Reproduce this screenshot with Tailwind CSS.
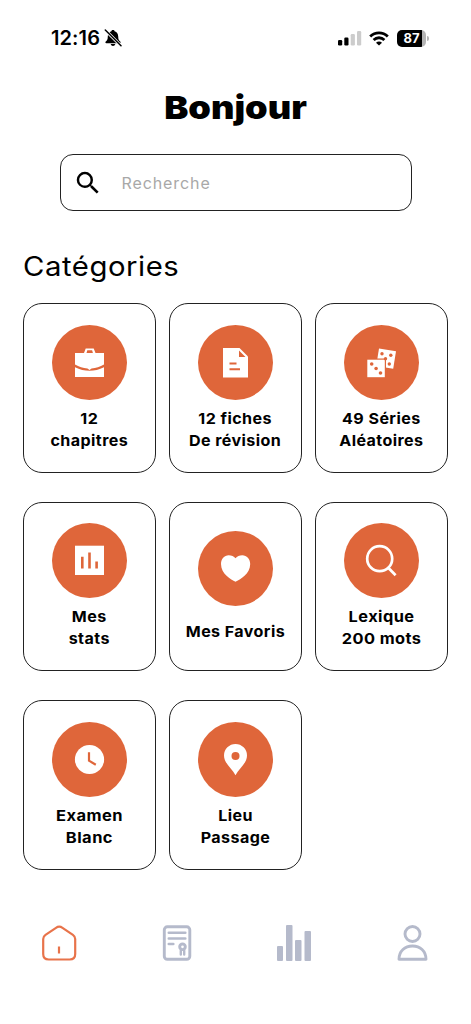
<!DOCTYPE html>
<html lang="fr">
<head>
<meta charset="utf-8">
<title>Bonjour</title>
<script src="https://cdn.jsdelivr.net/npm/@tailwindcss/browser@4"></script>
</head>
<body class="bg-white text-black font-['Inter',sans-serif]">
<main class="w-[471px] h-[1024px] overflow-hidden flex flex-col">
  <header class="h-[76px] shrink-0 flex items-center justify-between pl-[51px] pr-[42px]">
    <div class="flex items-center gap-[4px]">
      <span class="text-[20px] font-semibold tracking-[0.1px]">12:16</span>
      <svg class="w-[18px] h-[18px]" viewBox="0 0 18 18"><path d="M9 1c.9 0 1.500.5 1.600 1.300C13 3 14.200 5 14.200 7.500c0 3 .8 4 2 5.100.8.800.4 1.600-.5 1.600H2.300c-.9 0-1.300-.8-.5-1.600C3 11.500 3.800 10.500 3.800 7.500 3.800 5 5 3 7.400 2.300 7.500 1.500 8.100 1 9 1z"/><path d="M6.700 15h4.600c-.3 1.200-1.200 2-2.300 2s-2-.8-2.300-2z"/><path d="M1 .8 17.200 17" stroke="#fff" stroke-width="3"/><path d="M1.300 1 17 16.800" stroke="#000" stroke-width="1.500" stroke-linecap="round"/></svg>
    </div>
    <div class="flex items-center">
      <svg class="w-6 h-4" viewBox="0 0 24 16"><rect x="0" y="10" width="4.200" height="5.500" rx="1.200"/><rect x="6.300" y="7.500" width="4.200" height="8" rx="1.200"/><rect x="12.700" y="4" width="4.200" height="11.500" rx="1.200" fill="#ccc"/><rect x="19" y="1" width="4.200" height="14.500" rx="1.200" fill="#ccc"/></svg>
      <svg class="w-5 h-[15px] ml-[7px]" viewBox="0 0 20 15" fill="none" stroke="#000" stroke-width="2.800"><path d="M1.200 5.600C6.200.7 13.800.7 18.800 5.600"/><path d="M4.600 9c3.100-3 7.700-3 10.800 0"/><path d="M10 14.600 7 11.700c1.700-1.600 4.300-1.600 6 0z" fill="#000" stroke="none"/></svg>
      <div class="ml-[8px] w-[29px] h-[17px] rounded-[5px] overflow-hidden bg-[linear-gradient(90deg,#000_87%,#b5b5b5_87%)] text-white text-[13px] leading-[17px] font-bold text-center">87</div>
      <div class="ml-[1px] w-[2px] h-[5px] rounded-r-full bg-[#b5b5b5]"></div>
    </div>
  </header>

  <h1 class="mt-[12px] h-10 leading-10 text-center text-[32px] font-black scale-x-[1.13]">Bonjour</h1>

  <label class="mt-[26px] mx-auto w-[352px] h-[57px] shrink-0 flex items-center rounded-[13px] border border-[#222] pl-[12px]">
    <svg class="w-[30px] h-[30px]" viewBox="0 0 24 24"><path d="M15.500 14h-.79l-.28-.27A6.471 6.471 0 0 0 16 9.500 6.500 6.500 0 1 0 9.500 16c1.610 0 3.090-.59 4.230-1.570l.27.28v.79l5 4.990L20.490 19l-4.990-5zm-6 0C7.010 14 5 11.990 5 9.500S7.010 5 9.500 5 14 7.010 14 9.500 11.990 14 9.500 14z"/></svg>
    <span class="ml-[19px] text-[16px] tracking-[0.9px] text-[#a8a8a8]">Recherche</span>
  </label>

  <h2 class="mt-[36px] ml-[23px] h-10 leading-10 text-[27px] tracking-[0.5px] origin-left scale-x-[1.085]">Catégories</h2>

  <section class="mt-[16px] ml-[23px] grid grid-cols-[repeat(3,133px)] gap-x-[13px] gap-y-[29px] text-[15px] leading-[22px] tracking-[0.4px] font-bold text-center">
    <article class="h-[169.500px] rounded-[19px] border border-[#222] pt-px flex flex-col items-center justify-center gap-[8px]">
      <svg class="w-[75px] h-[75px]" viewBox="0 0 75 75"><circle cx="37.500" cy="37.500" r="37.500" fill="#df663a"/><path d="M23 28h9l1.700-4.500h8L43.500 28H52v11.500C48 41.800 44 43 39.500 43.500L37.500 45l-2-1.500C31 43 27 41.800 23 39.500z" fill="#fff"/><path d="M34.500 28l.8-2.700h4.800l.8 2.700" fill="#df663a"/><path d="M23 42.300c9.500 4.700 19.500 4.700 29 0V52H23z" fill="#fff"/></svg>
      <p class="scale-x-[1.07]">12<br>chapitres</p>
    </article>
    <article class="h-[169.500px] rounded-[19px] border border-[#222] pt-px flex flex-col items-center justify-center gap-[8px]">
      <svg class="w-[75px] h-[75px]" viewBox="0 0 75 75"><circle cx="37.500" cy="37.500" r="37.500" fill="#df663a"/><path d="M25 23h16.500l8.500 8.500V52.500H25z" fill="#fff"/><path d="M41 25.500v6.500h6.500zM31.500 37.500h7v2h-7zM31.500 43.300h10.500v2H31.500z" fill="#df663a"/></svg>
      <p class="scale-x-[1.07]">12 fiches<br>De révision</p>
    </article>
    <article class="h-[169.500px] rounded-[19px] border border-[#222] pt-px flex flex-col items-center justify-center gap-[8px]">
      <svg class="w-[75px] h-[75px]" viewBox="0 0 75 75"><circle cx="37.500" cy="37.500" r="37.500" fill="#df663a"/><path d="M35 23.500l17 2.700-2.800 17.500-17-2.700z" fill="#fff"/><g fill="#df663a"><circle cx="38" cy="28.700" r="1.700"/><circle cx="46.800" cy="30.200" r="1.700"/><circle cx="45.300" cy="39" r="1.700"/><path d="M22 33.500h20V53H22z"/></g><path d="M23.300 34.700h17.500v17.500H23.300z" fill="#fff"/><circle cx="41.500" cy="33.700" r="1.700" fill="#df663a"/><g fill="#df663a"><circle cx="27.700" cy="39" r="1.800"/><circle cx="32.100" cy="43.500" r="1.800"/><circle cx="36.500" cy="48" r="1.800"/></g></svg>
      <p class="scale-x-[1.07]">49 Séries<br>Aléatoires</p>
    </article>
    <article class="h-[169.500px] rounded-[19px] border border-[#222] pt-px flex flex-col items-center justify-center gap-[8px]">
      <svg class="w-[75px] h-[75px]" viewBox="0 0 75 75"><circle cx="37.500" cy="37.500" r="37.500" fill="#df663a"/><path d="M23 22.700h29V52H23z" fill="#fff"/><path d="M29 33.800h2.600v11.700H29zM36.200 29.500h2.600v16h-2.600zM43.300 38.500h2.600v7h-2.600z" fill="#df663a"/></svg>
      <p class="scale-x-[1.07]">Mes<br>stats</p>
    </article>
    <article class="h-[169.500px] rounded-[19px] border border-[#222] pt-px flex flex-col items-center justify-center gap-[15px]">
      <svg class="w-[75px] h-[75px]" viewBox="0 0 75 75"><circle cx="37.500" cy="37.500" r="37.500" fill="#df663a"/><path d="M37.500 50.700C33 48.500 23 43 23 33c0-5 3.300-8.700 7.700-8.700 2.800 0 5.200 1 6.800 2.900 1.600-1.900 4-2.900 6.800-2.900 4.400 0 7.900 3.700 7.900 8.700 0 10-10.200 15.500-14.700 17.700z" fill="#fff"/></svg>
      <p class="scale-x-[1.07]">Mes Favoris</p>
    </article>
    <article class="h-[169.500px] rounded-[19px] border border-[#222] pt-px flex flex-col items-center justify-center gap-[8px]">
      <svg class="w-[75px] h-[75px]" viewBox="0 0 75 75"><circle cx="37.500" cy="37.500" r="37.500" fill="#df663a"/><g fill="none" stroke="#fff" stroke-width="2.700"><circle cx="35.700" cy="35.700" r="12.500"/><path d="M44 44.500l7.600 7.700"/></g></svg>
      <p class="scale-x-[1.09]">Lexique<br>200 mots</p>
    </article>
    <article class="h-[169.500px] rounded-[19px] border border-[#222] pt-px flex flex-col items-center justify-center gap-[8px]">
      <svg class="w-[75px] h-[75px]" viewBox="0 0 75 75"><circle cx="37.500" cy="37.500" r="37.500" fill="#df663a"/><circle cx="37.500" cy="37.500" r="14.600" fill="#fff"/><path d="M37 30.200v8.500l6.800 4" fill="none" stroke="#df663a" stroke-width="2.200"/></svg>
      <p class="scale-x-[1.1]">Examen<br>Blanc</p>
    </article>
    <article class="h-[169.500px] rounded-[19px] border border-[#222] pt-px flex flex-col items-center justify-center gap-[8px]">
      <svg class="w-[75px] h-[75px]" viewBox="0 0 75 75"><circle cx="37.500" cy="37.500" r="37.500" fill="#df663a"/><path d="M37.500 53.300C34 46.500 26 41.500 26 33.500a11.500 11.500 0 0 1 23 0c0 8-8 13-11.500 19.800z" fill="#fff"/><circle cx="37.500" cy="34" r="4" fill="#df663a"/></svg>
      <p class="scale-x-[1.07]">Lieu<br>Passage</p>
    </article>
  </section>

  <nav class="mt-[55px] pl-[41px] pr-[43px] flex justify-between items-center">
    <svg class="w-9 h-9" viewBox="0 0 36 36" fill="none" stroke="#e8734a" stroke-width="2.200" stroke-linecap="round" stroke-linejoin="round"><path d="M15 2.800 4.500 9.800C3 10.800 2.200 12 2.200 14v15c0 3.500 2 5.500 5.500 5.500h21c3.500 0 5.500-2 5.500-5.500V14c0-2-.8-3.200-2.300-4.200L21.500 2.800c-2.300-1.600-4.200-1.600-6.500 0z"/><path d="M18 21.500v7" stroke-linecap="butt"/></svg>
    <svg class="w-[30px] h-9" viewBox="0 0 30 36" fill="none" stroke="#b5bacb" stroke-width="2.900" stroke-linecap="round"><rect x="2.300" y="1.800" width="25.500" height="32.500" rx="3"/><path d="M6.800 7.800h16.500M6.800 13.500h16.500M6.800 19h4.500" stroke-width="2.600"/><circle cx="20.500" cy="21.800" r="2.800"/><path d="M18.800 25.500v4M22.200 25.500v4" stroke-width="2.400"/></svg>
    <svg class="w-9 h-9" viewBox="0 0 36 36" fill="#b5bacb"><rect x="1" y="21" width="6" height="15" rx="1"/><rect x="10" y="0" width="6.500" height="36" rx="1"/><rect x="19" y="15" width="6.500" height="21" rx="1"/><rect x="28.500" y="6" width="6.500" height="30" rx="1"/></svg>
    <svg class="w-[31px] h-9" viewBox="0 0 31 36" fill="none" stroke="#b5bacb" stroke-width="2.900" stroke-linejoin="round"><circle cx="15.500" cy="9" r="7.500"/><path d="M2 34.300c0-8.500 6-13.300 13.500-13.300S29 25.800 29 34.300z"/></svg>
  </nav>
</main>
</body>
</html>
